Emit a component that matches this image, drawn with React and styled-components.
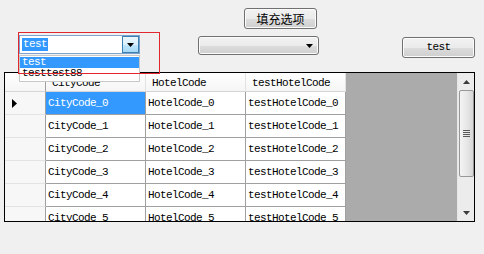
import React from "react";
import styled, { createGlobalStyle } from "styled-components";

const Global = createGlobalStyle`
  html, body { margin: 0; padding: 0; background: #f0f0f0; }
  body { width: 484px; height: 254px; overflow: hidden; }
`;

const mono = `"Liberation Mono", "DejaVu Sans Mono", "Noto Sans CJK SC", monospace`;

const Window = styled.div`
  width: 484px;
  height: 254px;
  background: #f0f0f0;
  font-family: ${mono};
  font-size: 11px;
  letter-spacing: -0.6px;
  color: #000;
`;

const Row1 = styled.div`
  height: 35px;
  box-sizing: border-box;
  padding: 8px 0 0 244px;
  display: flex;
  align-items: flex-start;
`;

const Row2 = styled.div`
  height: 37px;
  display: flex;
  align-items: flex-start;
  padding-left: 19px;
  position: relative;
  z-index: 2;
`;

const Button = styled.button`
  box-sizing: border-box;
  width: ${(p) => p.$w}px;
  height: ${(p) => p.$h}px;
  margin: ${(p) => p.$m || "0"};
  border: 1px solid #707070;
  border-radius: 3px;
  background: linear-gradient(#f2f2f2 0%, #ebebeb 50%, #dddddd 51%, #cfcfcf 100%);
  box-shadow: inset 0 0 0 1px #fcfcfc;
  padding: 0;
  font-family: ${(p) => (p.$cjk ? `"Noto Sans CJK SC", sans-serif` : mono)};
  font-size: ${(p) => (p.$cjk ? "12px" : "11px")};
  letter-spacing: ${(p) => (p.$cjk ? "0" : "-0.6px")};
  color: #000;
  display: flex;
  align-items: center;
  justify-content: center;
  line-height: 1;
`;

const ComboWrap = styled.div`
  position: relative;
  width: 121px;
  height: 19px;
`;

const ComboEdit = styled.div`
  box-sizing: border-box;
  width: 121px;
  height: 19px;
  background: #fff;
  border: 1px solid #7da2ce;
  display: flex;
  align-items: center;
  padding-left: 2px;
`;

const Sel = styled.span`
  background: #3399ff;
  color: #fff;
  padding: 0 1px 0 1px;
  height: 13px;
  display: flex;
  align-items: center;
  line-height: 13px;
`;

const DropBtn = styled.div`
  margin-left: auto;
  box-sizing: border-box;
  width: 17px;
  height: 17px;
  border: 1px solid #3c7fb1;
  background: linear-gradient(#eaf6fd 0%, #d9f0fc 50%, #bee6fd 51%, #a7d9f5 100%);
  display: flex;
  align-items: center;
  justify-content: center;
`;

const DropList = styled.div`
  position: absolute;
  left: 0;
  top: 20px;
  width: 121px;
  box-sizing: border-box;
  border: 1px solid #c8c8c8;
  background: #fff;
  padding: 1px 0 2px;
  z-index: 3;
`;

const Item = styled.div`
  height: 11px;
  line-height: 11px;
  padding-left: 2px;
  background: ${(p) => (p.$active ? "#3399ff" : "transparent")};
  color: ${(p) => (p.$active ? "#fff" : "#000")};
`;

const Annotation = styled.div`
  position: absolute;
  left: -1px;
  top: -3px;
  width: 142px;
  height: 42px;
  box-sizing: border-box;
  border: 1px solid #e0282e;
  pointer-events: none;
  z-index: 4;
`;

const Combo2 = styled.div`
  box-sizing: border-box;
  width: 121px;
  height: 19px;
  margin: 1px 0 0 58px;
  border: 1px solid #707070;
  border-radius: 3px;
  background: linear-gradient(#f2f2f2 0%, #ebebeb 50%, #dddddd 51%, #cfcfcf 100%);
  box-shadow: inset 0 0 0 1px #fcfcfc;
  display: flex;
  align-items: center;
  justify-content: flex-end;
  padding-right: 5px;
`;

const Grid = styled.div`
  margin-left: 4px;
  width: 471px;
  height: 150px;
  box-sizing: border-box;
  border: 1px solid #000;
  display: flex;
  overflow: hidden;
  background: #ababab;
  position: relative;
  z-index: 1;
`;

const Table = styled.div`
  display: flex;
  flex-direction: column;
`;

const HeaderRow = styled.div`
  display: flex;
  height: 19px;
  background: #fff;
`;

const HeadCell = styled.div`
  box-sizing: border-box;
  width: ${(p) => p.$w}px;
  height: 19px;
  border-right: 1px solid ${(p) => (p.$corner ? "#a0a0a0" : "#e2e2e2")};
  border-bottom: 1px solid #d5d5d5;
  background: linear-gradient(#ffffff, #f5f5f5);
  padding-left: 6px;
  display: flex;
  align-items: center;
  padding-top: 2px;
`;

const DataRow = styled.div`
  display: flex;
  height: 23px;
  flex-shrink: 0;
`;

const RowHead = styled.div`
  box-sizing: border-box;
  width: 41px;
  height: 23px;
  background: #f7f7f7;
  border-right: 1px solid #a0a0a0;
  border-bottom: 1px solid #e3e3e3;
  display: flex;
  align-items: center;
  padding-left: 7px;
`;

const Cell = styled.div`
  box-sizing: border-box;
  width: 100px;
  height: 23px;
  border-right: 1px solid #a0a0a0;
  border-bottom: 1px solid #a0a0a0;
  background: ${(p) => (p.$sel ? "#3399ff" : "#fff")};
  color: ${(p) => (p.$sel ? "#fff" : "#000")};
  display: flex;
  align-items: center;
  padding-left: 2px;
  white-space: nowrap;
`;

const Filler = styled.div`
  flex: 1;
  background: #ababab;
`;

const ScrollBar = styled.div`
  width: 17px;
  height: 100%;
  background: #ececec;
  border-left: 1px solid #e6e6e6;
  box-sizing: border-box;
  display: flex;
  flex-direction: column;
  align-items: center;
`;

const ArrowBtn = styled.div`
  width: 16px;
  height: 17px;
  display: flex;
  align-items: center;
  justify-content: center;
`;

const Thumb = styled.div`
  box-sizing: border-box;
  width: 15px;
  height: 87px;
  border: 1px solid #979797;
  border-radius: 2px;
  background: linear-gradient(90deg, #f3f3f3 0%, #e8e8e8 50%, #d6d6d6 100%);
  display: flex;
  align-items: center;
  justify-content: center;
`;

const Track = styled.div`
  flex: 1;
`;

const Tri = ({ dir = "down", size = 7, color = "#000" }) => {
  const pts = {
    down: "0,0 7,0 3.5,4",
    up: "0,4 7,4 3.5,0",
  }[dir];
  return (
    <svg width={size} height={4} viewBox="0 0 7 4">
      <polygon points={pts} fill={color} />
    </svg>
  );
};

const RowPointer = () => (
  <svg width="5" height="9" viewBox="0 0 5 9">
    <polygon points="0,0 5,4.5 0,9" fill="#000" />
  </svg>
);

const Grip = () => (
  <svg width="7" height="8" viewBox="0 0 7 8">
    {[0, 2, 4, 6].map((y) => (
      <rect key={y} x="0" y={y} width="7" height="1" fill="#5a5a5a" />
    ))}
  </svg>
);

const rows = [0, 1, 2, 3, 4, 5];

export default function App() {
  return (
    <Window>
      <Global />
      <Row1>
        <Button $w={73} $h={21} $cjk>填充选项</Button>
      </Row1>
      <Row2>
        <ComboWrap>
          <ComboEdit>
            <Sel>test</Sel>
            <DropBtn>
              <Tri dir="down" />
            </DropBtn>
          </ComboEdit>
          <DropList>
            <Item $active>test</Item>
            <Item>testtest88</Item>
          </DropList>
          <Annotation />
        </ComboWrap>
        <Combo2>
          <Tri dir="down" />
        </Combo2>
        <Button $w={73} $h={21} $m="2px 0 0 83px">test</Button>
      </Row2>
      <Grid>
        <Table>
          <HeaderRow>
            <HeadCell $w={41} $corner />
            <HeadCell $w={100}>CityCode</HeadCell>
            <HeadCell $w={100}>HotelCode</HeadCell>
            <HeadCell $w={100}>testHotelCode</HeadCell>
          </HeaderRow>
          {rows.map((i) => (
            <DataRow key={i}>
              <RowHead>{i === 0 && <RowPointer />}</RowHead>
              <Cell $sel={i === 0}>CityCode_{i}</Cell>
              <Cell>HotelCode_{i}</Cell>
              <Cell>testHotelCode_{i}</Cell>
            </DataRow>
          ))}
        </Table>
        <Filler />
        <ScrollBar>
          <ArrowBtn>
            <Tri dir="up" color="#3c3c3c" />
          </ArrowBtn>
          <Thumb>
            <Grip />
          </Thumb>
          <Track />
          <ArrowBtn>
            <Tri dir="down" color="#3c3c3c" />
          </ArrowBtn>
        </ScrollBar>
      </Grid>
    </Window>
  );
}
